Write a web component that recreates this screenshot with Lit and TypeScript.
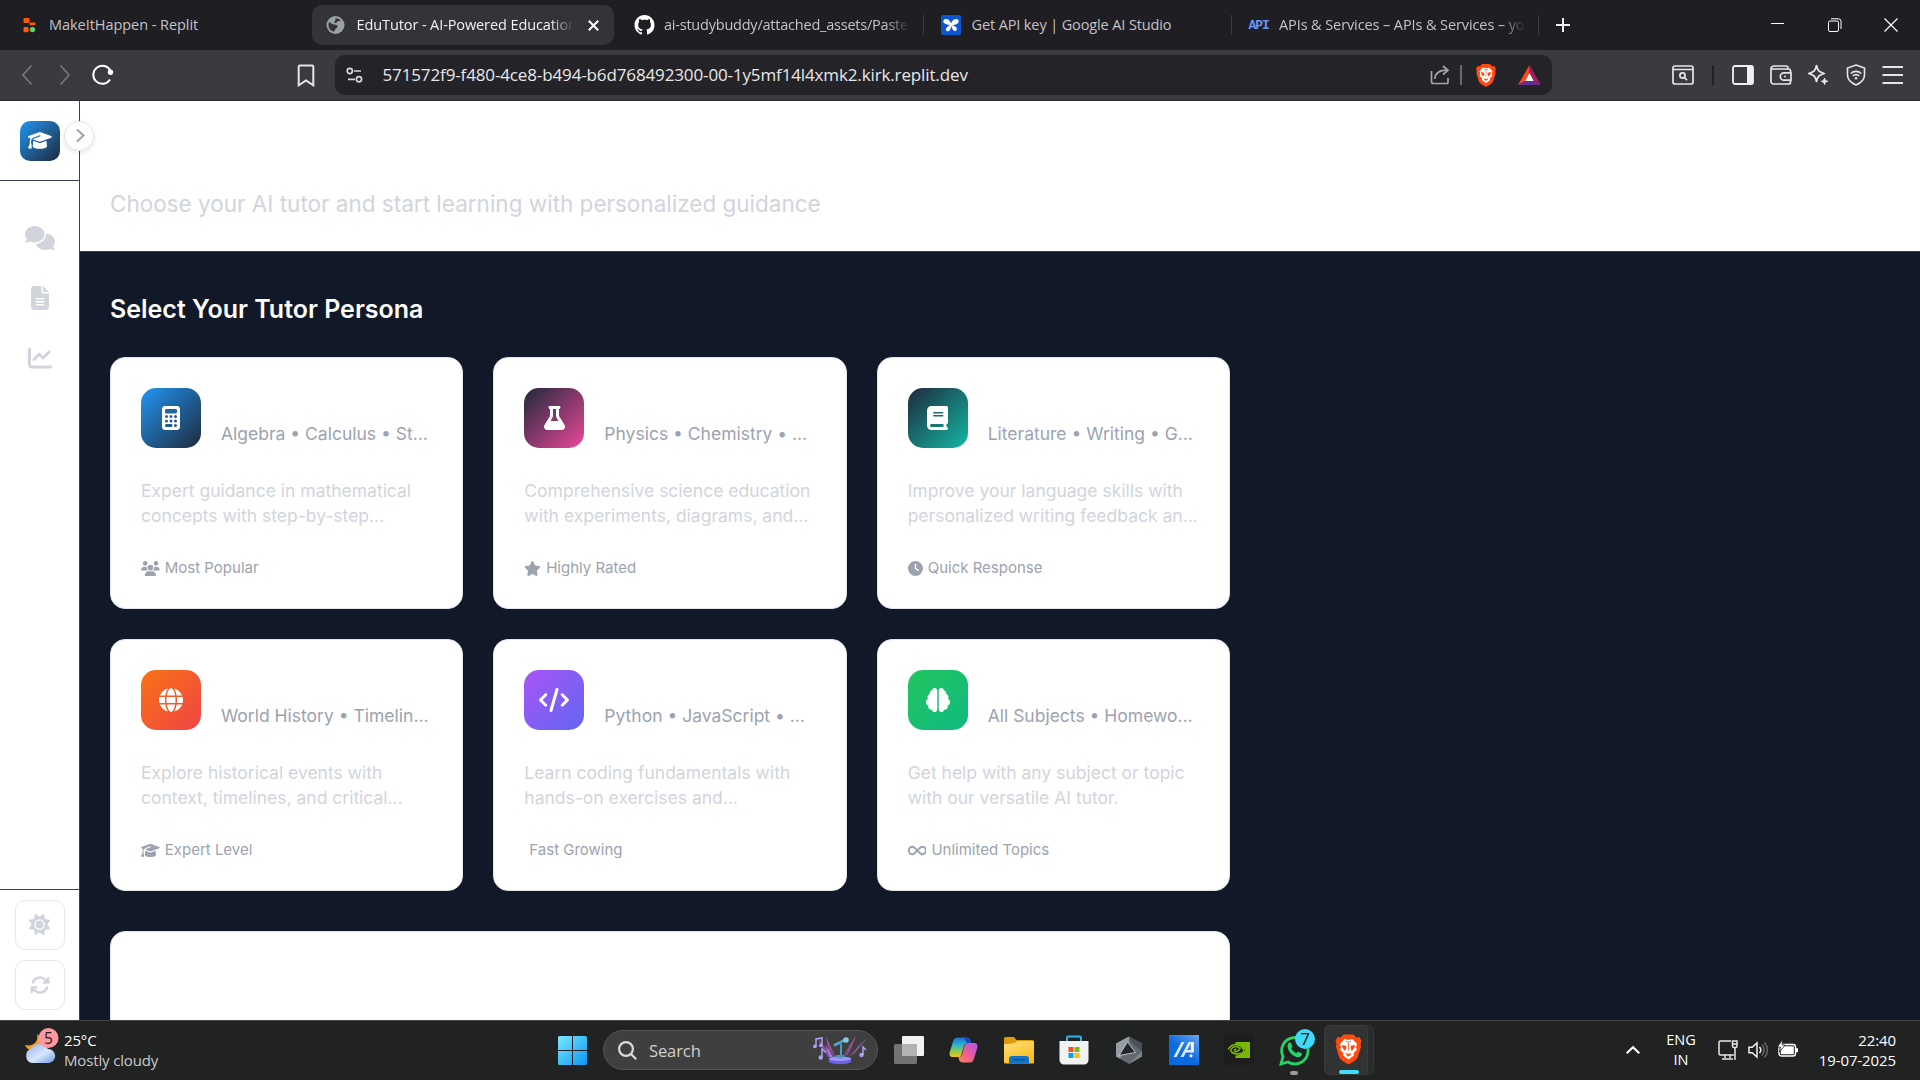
import { LitElement, html, css, svg } from "lit";
import { customElement } from "lit/decorators.js";

const FA: Record<string, [number, string]> = {
  cap: [640, "M320 32c-8.1 0-16.1 1.4-23.7 4.1L15.8 137.4C6.3 140.9 0 149.9 0 160s6.3 19.1 15.8 22.6l57.9 20.9C57.3 229.3 48 259.8 48 291.9v28.1c0 28.4-10.8 57.7-22.3 80.8c-6.5 13-13.9 25.8-22.5 37.6C0 442.7-.9 448.3 .9 453.4s6 8.9 11.2 10.2l64 16c4.2 1.1 8.7 .3 12.4-2s6.3-6.1 7.1-10.4c8.6-42.8 4.3-81.2-2.1-108.7C90.3 344.3 86 329.8 80 316.5V291.9c0-30.2 10.2-58.7 27.9-81.5c12.9-15.5 29.6-28 49.2-35.7l157-61.7c8.2-3.2 17.5 .8 20.7 9s-.8 17.5-9 20.7l-157 61.7c-12.4 4.9-23.3 12.4-32.2 21.6l159.6 57.6c7.6 2.7 15.6 4.1 23.7 4.1s16.1-1.4 23.7-4.1L624.2 182.6c9.5-3.4 15.8-12.5 15.8-22.6s-6.3-19.1-15.8-22.6L343.7 36.1C336.1 33.4 328.1 32 320 32zM128 408c0 35.3 86 72 192 72s192-36.7 192-72L496.7 262.6 354.5 314c-11.1 4-22.8 6-34.5 6s-23.5-2-34.5-6L143.3 262.6 128 408z"],
  comments: [640, "M208 352c114.9 0 208-78.8 208-176S322.9 0 208 0S0 78.8 0 176c0 38.6 14.7 74.3 39.6 103.4c-3.5 9.4-8.7 17.7-14.2 24.7c-4.8 6.2-9.7 11-13.3 14.3c-1.8 1.6-3.3 2.9-4.3 3.7c-.5 .4-.9 .7-1.1 .8l-.2 .2C1 327.2-1.4 334.4 .8 340.9S9.1 352 16 352c21.8 0 43.8-5.6 62.1-12.5c9.2-3.5 17.8-7.4 25.2-11.4C134.1 343.3 169.8 352 208 352zM448 176c0 112.3-99.1 196.9-216.5 207C255.8 457.4 336.4 512 432 512c38.2 0 73.9-8.7 104.7-23.9c7.5 4 16 7.9 25.2 11.4c18.3 6.9 40.3 12.5 62.1 12.5c6.9 0 13.1-4.5 15.2-11.1c2.1-6.6-.2-13.8-5.8-17.9l-.2-.2c-.2-.2-.6-.4-1.1-.8c-1-.8-2.5-2-4.3-3.7c-3.6-3.3-8.5-8.1-13.3-14.3c-5.5-7-10.7-15.4-14.2-24.7c24.9-29 39.6-64.7 39.6-103.4c0-92.8-84.9-168.9-192.6-175.5c.4 5.1 .6 10.3 .6 15.5z"],
  file: [384, "M64 0C28.7 0 0 28.7 0 64V448c0 35.3 28.7 64 64 64H320c35.3 0 64-28.7 64-64V160H256c-17.7 0-32-14.3-32-32V0H64zM256 0V128H384L256 0zM112 256H272c8.8 0 16 7.2 16 16s-7.2 16-16 16H112c-8.8 0-16-7.2-16-16s7.2-16 16-16zm0 64H272c8.8 0 16 7.2 16 16s-7.2 16-16 16H112c-8.8 0-16-7.2-16-16s7.2-16 16-16zm0 64H272c8.8 0 16 7.2 16 16s-7.2 16-16 16H112c-8.8 0-16-7.2-16-16s7.2-16 16-16z"],
  chart: [512, "M64 64c0-17.7-14.3-32-32-32S0 46.3 0 64V400c0 44.2 35.8 80 80 80H480c17.7 0 32-14.3 32-32s-14.3-32-32-32H80c-8.8 0-16-7.2-16-16V64zm406.6 86.6c12.5-12.5 12.5-32.8 0-45.3s-32.8-12.5-45.3 0L320 210.7l-57.4-57.4c-12.5-12.5-32.8-12.5-45.3 0l-112 112c-12.5 12.5-12.5 32.8 0 45.3s32.8 12.5 45.3 0L240 221.3l57.4 57.4c12.5 12.5 32.8 12.5 45.3 0l128-128z"],
  calculator: [384, "M64 0C28.7 0 0 28.7 0 64V448c0 35.3 28.7 64 64 64H320c35.3 0 64-28.7 64-64V64c0-35.3-28.7-64-64-64H64zM96 64H288c17.7 0 32 14.3 32 32v32c0 17.7-14.3 32-32 32H96c-17.7 0-32-14.3-32-32V96c0-17.7 14.3-32 32-32zm32 160a32 32 0 1 1-64 0 32 32 0 1 1 64 0zM96 352a32 32 0 1 1 0-64 32 32 0 1 1 0 64zM64 416c0-17.7 14.3-32 32-32h96c17.7 0 32 14.3 32 32s-14.3 32-32 32H96c-17.7 0-32-14.3-32-32zM192 256a32 32 0 1 1 0-64 32 32 0 1 1 0 64zm32 64a32 32 0 1 1-64 0 32 32 0 1 1 64 0zm64-64a32 32 0 1 1 0-64 32 32 0 1 1 0 64zm32 64a32 32 0 1 1-64 0 32 32 0 1 1 64 0zM288 448a32 32 0 1 1 0-64 32 32 0 1 1 0 64z"],
  flask: [448, "M288 0H160 128C110.3 0 96 14.3 96 32s14.3 32 32 32V196.8c0 11.8-3.3 23.5-9.5 33.5L10.3 406.2C3.6 417.2 0 429.7 0 442.6C0 480.9 31.1 512 69.4 512H378.6c38.3 0 69.4-31.1 69.4-69.4c0-12.8-3.6-25.4-10.3-36.4L329.5 230.4c-6.2-10.1-9.5-21.7-9.5-33.5V64c17.7 0 32-14.3 32-32s-14.3-32-32-32H288zM192 196.8V64h64V196.8c0 23.7 6.6 46.9 19 67.1L309.5 320h-171L173 263.9c12.4-20.2 19-43.4 19-67.1z"],
  book: [448, "M96 0C43 0 0 43 0 96V416c0 53 43 96 96 96H384h32c17.7 0 32-14.3 32-32s-14.3-32-32-32V384c17.7 0 32-14.3 32-32V32c0-17.7-14.3-32-32-32H384 96zm0 384H352v64H96c-17.7 0-32-14.3-32-32s14.3-32 32-32zm32-240c0-8.8 7.2-16 16-16H336c8.8 0 16 7.2 16 16s-7.2 16-16 16H144c-8.8 0-16-7.2-16-16zm16 48H336c8.8 0 16 7.2 16 16s-7.2 16-16 16H144c-8.8 0-16-7.2-16-16s7.2-16 16-16z"],
  globe: [512, "M352 256c0 22.2-1.2 43.6-3.3 64H163.3c-2.2-20.4-3.3-41.8-3.3-64s1.2-43.6 3.3-64H348.7c2.2 20.4 3.3 41.8 3.3 64zm28.8-64H503.9c5.3 20.5 8.1 41.9 8.1 64s-2.8 43.5-8.1 64H380.8c2.1-20.6 3.2-42 3.2-64s-1.1-43.4-3.2-64zm112.6-32H376.7c-10-63.9-29.8-117.4-55.3-151.6c78.3 20.7 142 77.5 171.9 151.6zm-149.1 0H167.7c6.1-36.4 15.5-68.6 27-94.7c10.5-23.6 22.2-40.7 33.5-51.5C239.4 3.2 248.7 0 256 0s16.6 3.2 27.8 13.8c11.3 10.8 23 27.9 33.5 51.5c11.6 26 20.9 58.2 27 94.7zm-209 0H18.6C48.6 85.9 112.2 29.1 190.6 8.4C165.1 42.6 145.3 96.1 135.3 160zM8.1 192H131.2c-2.1 20.6-3.2 42-3.2 64s1.1 43.4 3.2 64H8.1C2.8 299.5 0 278.1 0 256s2.8-43.5 8.1-64zM194.7 446.6c-11.6-26-20.9-58.2-27-94.6H344.3c-6.1 36.4-15.5 68.6-27 94.6c-10.5 23.6-22.2 40.7-33.5 51.5C272.6 508.8 263.3 512 256 512s-16.6-3.2-27.8-13.8c-11.3-10.8-23-27.9-33.5-51.5zM135.3 352c10 63.9 29.8 117.4 55.3 151.6C112.2 482.9 48.6 426.1 18.6 352H135.3zm358.1 0c-30 74.1-93.6 130.9-171.9 151.6c25.5-34.2 45.2-87.7 55.3-151.6H493.4z"],
  code: [640, "M392.8 1.2c-17-4.9-34.7 5-39.6 22l-128 448c-4.9 17 5 34.7 22 39.6s34.7-5 39.6-22l128-448c4.9-17-5-34.7-22-39.6zm80.6 120.1c-12.5 12.5-12.5 32.8 0 45.3L562.7 256l-89.4 89.4c-12.5 12.5-12.5 32.8 0 45.3s32.8 12.5 45.3 0l112-112c12.5-12.5 12.5-32.8 0-45.3l-112-112c-12.5-12.5-32.8-12.5-45.3 0zm-306.7 0c-12.5-12.5-32.8-12.5-45.3 0l-112 112c-12.5 12.5-12.5 32.8 0 45.3l112 112c12.5 12.5 32.8 12.5 45.3 0s12.5-32.8 0-45.3L77.3 256l89.4-89.4c12.5-12.5 12.5-32.8 0-45.3z"],
  brain: [512, "M184 0c30.9 0 56 25.1 56 56V456c0 30.9-25.1 56-56 56c-28.9 0-52.7-21.9-55.7-50.1c-5.2 1.4-10.7 2.1-16.3 2.1c-35.3 0-64-28.7-64-64c0-7.4 1.3-14.6 3.6-21.2C21.4 367.4 0 338.2 0 304c0-31.9 18.7-59.5 45.8-72.3C37.1 220.8 32 207 32 192c0-30.7 21.6-56.3 50.4-62.6C80.8 123.9 80 118 80 112c0-29.9 20.6-55.1 48.3-62.1C131.3 21.9 155.1 0 184 0zM328 0c28.9 0 52.6 21.9 55.7 49.9c27.8 7 48.3 32.1 48.3 62.1c0 6-.8 11.9-2.4 17.4c28.8 6.2 50.4 31.9 50.4 62.6c0 15-5.1 28.8-13.8 39.7C493.3 244.5 512 272.1 512 304c0 34.2-21.4 63.4-51.6 74.8c2.3 6.6 3.6 13.8 3.6 21.2c0 35.3-28.7 64-64 64c-5.6 0-11.1-.7-16.3-2.1c-3 28.2-26.8 50.1-55.7 50.1c-30.9 0-56-25.1-56-56V56c0-30.9 25.1-56 56-56z"],
  users: [640, "M144 0a80 80 0 1 1 0 160A80 80 0 1 1 144 0zM512 0a80 80 0 1 1 0 160A80 80 0 1 1 512 0zM0 298.7C0 239.8 47.8 192 106.7 192h42.7c15.9 0 31 3.5 44.6 9.7c-1.3 7.2-1.9 14.7-1.9 22.3c0 38.2 16.8 72.5 43.3 96c-.2 0-.4 0-.7 0H21.3C9.6 320 0 310.4 0 298.7zM405.3 320c-.2 0-.4 0-.7 0c26.6-23.5 43.3-57.8 43.3-96c0-7.6-.7-15-1.9-22.3c13.6-6.3 28.7-9.7 44.6-9.7h42.7C592.2 192 640 239.8 640 298.7c0 11.8-9.6 21.3-21.3 21.3H405.3zM224 224a96 96 0 1 1 192 0 96 96 0 1 1 -192 0zM128 485.3C128 411.7 187.7 352 261.3 352H378.7C452.3 352 512 411.7 512 485.3c0 14.7-11.9 26.7-26.7 26.7H154.7c-14.7 0-26.7-11.9-26.7-26.7z"],
  star: [576, "M316.9 18C311.6 7 300.4 0 288.1 0s-23.4 7-28.8 18L195 150.3 51.4 171.5c-12 1.8-22 10.2-25.7 21.7s-.7 24.2 7.9 32.7L137.8 329 113.2 474.7c-2 12 3 24.2 12.9 31.3s23 8 33.8 2.3l128.3-68.5 128.3 68.5c10.8 5.7 23.9 4.9 33.8-2.3s14.9-19.3 12.9-31.3L438.5 329 542.7 225.9c8.6-8.5 11.7-21.2 7.9-32.7s-13.7-19.9-25.7-21.7L381.2 150.3 316.9 18z"],
  clock: [512, "M256 0a256 256 0 1 1 0 512A256 256 0 1 1 256 0zM232 120V256c0 8 4 15.5 10.7 20l96 64c11 7.4 25.9 4.4 33.3-6.7s4.4-25.9-6.7-33.3L280 243.2V120c0-13.3-10.7-24-24-24s-24 10.7-24 24z"],
  infinity: [640, "M0 241.1C0 161 65 96 145.1 96c38.5 0 75.4 15.3 102.6 42.5L320 210.7l72.2-72.2C419.5 111.3 456.4 96 494.9 96C575 96 640 161 640 241.1v29.7C640 351 575 416 494.9 416c-38.5 0-75.4-15.3-102.6-42.5L320 301.3l-72.2 72.2C220.5 400.7 183.6 416 145.1 416C65 416 0 351 0 270.9V241.1zM274.7 256l-72.2-72.2c-15.2-15.2-35.9-23.8-57.4-23.8C100.3 160 64 196.3 64 241.1v29.7c0 44.8 36.3 81.1 81.1 81.1c21.5 0 42.2-8.5 57.4-23.8L274.7 256zm90.5 0l72.2 72.2c15.2 15.2 35.9 23.8 57.4 23.8c44.8 0 81.1-36.3 81.1-81.1V241.1c0-44.8-36.3-81.1-81.1-81.1c-21.5 0-42.2 8.5-57.4 23.8L365.3 256z"],
  sun: [512, "M361.5 1.2c5 2.1 8.6 6.6 9.6 11.9L391 121l107.9 19.8c5.3 1 9.8 4.6 11.9 9.6s1.5 10.7-1.6 15.2L446.9 256l62.3 90.3c3.1 4.5 3.7 10.2 1.6 15.2s-6.6 8.6-11.9 9.6L391 391 371.1 498.9c-1 5.3-4.6 9.8-9.6 11.9s-10.7 1.5-15.2-1.6L256 446.9l-90.3 62.3c-4.5 3.1-10.2 3.7-15.2 1.6s-8.6-6.6-9.6-11.9L121 391 13.1 371.1c-5.3-1-9.8-4.6-11.9-9.6s-1.5-10.7 1.6-15.2L65.1 256 2.8 165.7c-3.1-4.5-3.7-10.2-1.6-15.2s6.6-8.6 11.9-9.6L121 121 140.9 13.1c1-5.3 4.6-9.8 9.6-11.9s10.7-1.5 15.2 1.6L256 65.1 346.3 2.8c4.5-3.1 10.2-3.7 15.2-1.6zM160 256a96 96 0 1 1 192 0 96 96 0 1 1 -192 0zm224 0a128 128 0 1 0 -256 0 128 128 0 1 0 256 0z"],
  sync: [512, "M105.1 202.6c7.7-21.8 20.2-42.3 37.8-59.8c62.5-62.5 163.8-62.5 226.3 0L386.3 160H352c-17.7 0-32 14.3-32 32s14.3 32 32 32H463.5h.4c17.7 0 32-14.3 32-32V80c0-17.7-14.3-32-32-32s-32 14.3-32 32v35.2L414.4 97.6c-87.5-87.5-229.3-87.5-316.8 0C73.2 122 55.6 150.7 44.8 181.4c-5.9 16.7 2.9 34.9 19.5 40.8s34.9-2.9 40.8-19.5zM39 289.3c-5 1.5-9.8 4.2-13.7 8.2c-4 4-6.7 8.8-8.1 14c-.3 1.2-.6 2.5-.8 3.8c-.3 1.7-.4 3.4-.4 5.1V432c0 17.7 14.3 32 32 32s32-14.3 32-32V396.9l17.6 17.5c87.5 87.4 229.3 87.4 316.7 0c24.4-24.4 42.1-53.1 52.9-83.7c5.9-16.7-2.9-34.9-19.5-40.8s-34.9 2.9-40.8 19.5c-7.7 21.8-20.2 42.3-37.8 59.8c-62.5 62.5-163.8 62.5-226.3 0l-.1-.1L125.6 352H160c17.7 0 32-14.3 32-32s-14.3-32-32-32H48.4c-1.6 0-3.2 .1-4.8 .3s-3.1 .5-4.6 1z"],
};

const fa = (name: string, size: number) => {
  const [w, d] = FA[name];
  return html`<svg width=${(w / 512) * size} height=${size} viewBox="0 0 ${w} 512" fill="currentColor" fill-rule="evenodd"><path d=${d}></path></svg>`;
};

const GITHUB = "M8 0C3.58 0 0 3.58 0 8c0 3.54 2.29 6.53 5.47 7.59.4.07.55-.17.55-.38 0-.19-.01-.82-.01-1.49-2.01.37-2.53-.49-2.69-.94-.09-.23-.48-.94-.82-1.13-.28-.15-.68-.52-.01-.53.63-.01 1.08.58 1.23.82.72 1.21 1.87.87 2.33.66.07-.52.28-.87.51-1.07-1.78-.2-3.64-.89-3.64-3.95 0-.87.31-1.59.82-2.15-.08-.2-.36-1.02.08-2.12 0 0 .67-.21 2.2.82.64-.18 1.32-.27 2-.27s1.36.09 2 .27c1.53-1.04 2.2-.82 2.2-.82.44 1.1.16 1.92.08 2.12.51.56.82 1.27.82 2.15 0 3.07-1.87 3.75-3.65 3.95.29.25.54.73.54 1.48 0 1.07-.01 1.93-.01 2.2 0 .21.15.46.55.38A8.01 8.01 0 0 0 16 8c0-4.42-3.58-8-8-8z";

/* Lion emblem on a 26 x 30 grid. */
const lion = svg`
  <path d="M8 0h10l3 3 3-.5 2 4-1 3 .6 2.500-3.600 11.500-3 3L13 30l-6-3.500-3-3L.4 12 1 9.500 0 6.500l2-4L5 3z" fill="#ff4a12"></path>
  <path d="M9 4.500l4 1 4-1 4.500 5-1 3 .8 3-3.300 3.200.4 2.300-5.400 4-5.400-4 .4-2.300-3.300-3.200.8-3-1-3z" fill="#fff"></path>
  <path d="M6.500 10.500l4 .8.5 1.700-1.200 3.500L7 13.500zM19.500 10.500l-4 .8-.5 1.700 1.200 3.500 2.800-3zM10 18.500l3 1 3-1-1.200 2.300L13 22l-1.800-1.200z" fill="#ff4a12"></path>
  <path d="M13 8v8M10.300 6.800l2.700.7 2.700-.7" stroke="#ff4a12" stroke-width=".8" fill="none"></path>`;

const ICONS = {
  replit: html`<svg width="20" height="20" viewBox="0 0 20 20"><rect x="4.500" y="3" width="6" height="5" rx="1" fill="#ff5c00"></rect><rect x="10.500" y="7.500" width="6" height="2.800" rx="1" fill="#ff5c00"></rect><rect x="4.500" y="12" width="5" height="5.300" rx="1" fill="#ff5c00"></rect><circle cx="13.500" cy="14.600" r="2.700" fill="#62d26f"></circle></svg>`,
  world: html`<svg width="20" height="20" viewBox="0 0 20 20"><circle cx="9.500" cy="10" r="9" fill="#9aa0a6"></circle><path d="M2.800 7.500c2-.3 3 1.800 5 2s3.700.3 3.700 2-1.500 1.500-2 2.500-1 2.200-1.600 2.700C5 16 2.500 13.500 2.500 10zM9.500 3.200c2 0 4 .8 5.200 2.300-1 .6-2 .2-3 .8s-.7 1.700-2 1.700-1.700-1-1-2 1.300-1.300.8-2.800z" fill="#343338"></path></svg>`,
  github: html`<svg width="21" height="20" viewBox="0 0 16 16" fill="#fff"><path d=${GITHUB}></path></svg>`,
  studio: html`<svg width="20" height="20" viewBox="0 0 20 20"><rect width="20" height="20" rx="2" fill="#0b57d0"></rect><path d="M10.500 10C9.500 5 6 3.300 3.800 4.200S2 7.700 4.200 8.800s4 1.500 6.300 1.200z" fill="#fff"></path><path d="M9.800 10.500c0-4 3-7.200 6-6.500s2.200 4.300-.3 5.200-3.700.8-5.700 1.300z" fill="#fff"></path><path d="M10.200 9.500c-3 1.500-5.700 3.500-5.200 5.500s3.300 1.500 4.200-.5 1-3 1-5zM9.800 9.500c1 3 2 6.500 4.200 6.500s2.500-2.500.8-4-3.200-1.700-5-2.500z" fill="#fff"></path></svg>`,
  api: html`<span class="api">API</span>`,
};

const TABS = [
  { icon: ICONS.replit, title: "MakeItHappen - Replit", cls: "t0" },
  { icon: ICONS.world, title: "EduTutor - AI-Powered Education", cls: "t1 active" },
  { icon: ICONS.github, title: "ai-studybuddy/attached_assets/Paste", cls: "t2 sep" },
  { icon: ICONS.studio, title: "Get API key | Google AI Studio", cls: "t3 sep" },
  { icon: ICONS.api, title: "APIs & Services – APIs & Services – yo", cls: "t4 sep" },
];

const TUTORS = [
  { icon: "calculator", tone: "math", topics: "Algebra • Calculus • St…", lines: ["Expert guidance in mathematical", "concepts with step-by-step…"], badge: "users", note: "Most Popular" },
  { icon: "flask", tone: "science", topics: "Physics • Chemistry • …", lines: ["Comprehensive science education", "with experiments, diagrams, and…"], badge: "star", note: "Highly Rated" },
  { icon: "book", tone: "lang", topics: "Literature • Writing • G…", lines: ["Improve your language skills with", "personalized writing feedback an…"], badge: "clock", note: "Quick Response" },
  { icon: "globe", tone: "history", topics: "World History • Timelin…", lines: ["Explore historical events with", "context, timelines, and critical…"], badge: "cap", note: "Expert Level" },
  { icon: "code", tone: "coding", topics: "Python • JavaScript • …", lines: ["Learn coding fundamentals with", "hands-on exercises and…"], badge: "", note: "Fast Growing" },
  { icon: "brain", tone: "general", topics: "All Subjects • Homewo…", lines: ["Get help with any subject or topic", "with our versatile AI tutor."], badge: "infinity", note: "Unlimited Topics" },
];

@customElement("browser-chrome")
class BrowserChrome extends LitElement {
  static styles = css`
    :host { display: block; height: 101px; font-family: "Open Sans", "Noto Sans", sans-serif; color: #c3c2c6; }
    svg { display: block; flex: none; }
    .tabs { height: 50px; box-sizing: border-box; background: #1f1e23; display: flex; align-items: center; padding-left: 1.500px; }
    .slot { width: 307.500px; height: 50px; box-sizing: border-box; padding: 5px 3px; display: flex; flex: none; }
    .sep { background: linear-gradient(#3c3b40, #3c3b40) right center / 1px 20px no-repeat; }
    .tab { flex: 1; display: flex; align-items: center; padding-left: 14px; border-radius: 10px; min-width: 0; }
    .active .tab { background: #343338; color: #f1f1f3; }
    .fav { width: 20px; height: 20px; display: flex; align-items: center; flex: none; margin-right: 10.500px; }
    .title { width: 246px; overflow: hidden; white-space: pre; font-size: 14.500px; line-height: 22px; }
    .active .title { width: 217px; -webkit-mask-image: linear-gradient(90deg, #000 89%, transparent); }
    .t2 .title, .t4 .title { -webkit-mask-image: linear-gradient(90deg, #000 90%, transparent); }
    .t0 .title { letter-spacing: -0.05px; }
    .t1 .title { letter-spacing: -0.1px; }
    .t2 .title { letter-spacing: -0.22px; }
    .t3 .title { letter-spacing: -0.12px; }
    .t4 .title { letter-spacing: -0.1px; }
    .x { margin-left: 14px; }
    .api { font: 700 13px "Liberation Mono", monospace; letter-spacing: -1px; color: #6a95f5; }
    .plus { margin-left: 17px; }
    .win { margin-left: auto; display: flex; gap: 42.500px; padding-right: 22px; align-items: center; }
    .bar { height: 51px; box-sizing: border-box; background: #3b3a3f; border-bottom: 1px solid #2c2b30; display: flex; align-items: center; padding-left: 20px; }
    .nav { display: flex; align-items: center; gap: 24px; width: 277px; flex: none; }
    .reload { margin-left: -4px; }
    .url { margin-left: 20px; width: 1217px; height: 40px; box-sizing: border-box; border-radius: 10px; background: #242328; display: flex; align-items: center; padding: 0 11px 0 11px; flex: none; }
    .addr { margin-left: 19.500px; font-size: 17px; line-height: 24px; color: #e8e8ea; letter-spacing: -0.13px; white-space: nowrap; flex: 1; }
    .line { width: 2px; height: 20px; background: #69686d; margin: 0 14px 0 10px; }
    .bat { margin-left: 22px; }
    .right { display: flex; align-items: center; margin-left: auto; padding-right: 16px; gap: 16px; }
    .find { margin-right: 2px; }
    .line2 { width: 2px; height: 20px; background: #222126; margin-right: 2px; }
    .spark { margin: 0 1px 0 -1px; }
  `;
  render() {
    return html`
      <div class="tabs">
        ${TABS.map((t) => html`<div class="slot ${t.cls}"><div class="tab"><span class="fav">${t.icon}</span><span class="title">${t.title}</span>
          ${t.cls.includes("active") ? html`<svg class="x" width="11" height="11" viewBox="0 0 11 11" stroke="#fff" stroke-width="2"><path d="M.8.8l9.400 9.400M10.200.8L.8 10.200"></path></svg>` : ""}</div></div>`)}
        <svg class="plus" width="14" height="14" viewBox="0 0 14 14" stroke="#eee" stroke-width="2"><path d="M7 0v14M0 7h14"></path></svg>
        <div class="win">
          <svg width="14" height="14" viewBox="0 0 14 14" stroke="#fff" stroke-width="1"><path d="M0 5.500h13"></path></svg>
          <svg width="14" height="14" viewBox="0 0 14 14" stroke="#fff" fill="none"><rect x=".5" y="3" width="10" height="10.500" rx="1.500"></rect><path d="M3 .8h7.500a2.500 2.500 0 0 1 2.500 2.500V11"></path></svg>
          <svg width="14" height="14" viewBox="0 0 14 14" stroke="#fff" stroke-width="1.200"><path d="M.5.5l13 13M13.500.5l-13 13"></path></svg>
        </div>
      </div>
      <div class="bar">
        <div class="nav">
          <svg width="14" height="22" viewBox="0 0 14 22" fill="none" stroke="#77767b" stroke-width="1.700"><path d="M11.500 1.500L3 11l8.500 9.500"></path></svg>
          <svg width="14" height="22" viewBox="0 0 14 22" fill="none" stroke="#77767b" stroke-width="1.700"><path d="M2.500 1.500L11 11l-8.500 9.500"></path></svg>
          <svg class="reload" width="22" height="22" viewBox="0 0 22 22"><path d="M18 15.500A9 9 0 1 1 18.500 7" fill="none" stroke="#fff" stroke-width="2"></path><circle cx="18.500" cy="8.300" r="2.700" fill="#fff"></circle></svg>
        </div>
        <svg width="18" height="23" viewBox="0 0 18 23" fill="none" stroke="#e6e6e8" stroke-width="2"><path d="M3 1.500h12a1.300 1.300 0 0 1 1.300 1.300V21.300L9 16.500l-7.300 4.800V2.800A1.300 1.300 0 0 1 3 1.500z"></path></svg>
        <div class="url">
          <svg width="17" height="16" viewBox="0 0 17 16" fill="none" stroke="#d8d8da" stroke-width="1.700"><circle cx="3.800" cy="4" r="2.600"></circle><path d="M8 4h7M2 12.300h7"></path><circle cx="13" cy="12.300" r="2.600"></circle></svg>
          <span class="addr">571572f9-f480-4ce8-b494-b6d768492300-00-1y5mf14l4xmk2.kirk.replit.dev</span>
          <svg width="20" height="20" viewBox="0 0 20 20" fill="none" stroke="#a5a4a9" stroke-width="1.700"><path d="M1.500 6v10.500a2 2 0 0 0 2 2H18M18 18.500V13M4.800 14c.3-5 4-9 13-8.800M13 1l5 4.300-5 4.200"></path></svg>
          <span class="line"></span>
          <svg width="20" height="23" viewBox="0 0 26 30">${lion}</svg>
          <svg class="bat" width="23" height="20" viewBox="0 0 23 20"><path d="M11.500 0L0 20l7.500-4 4-8z" fill="#ff4724"></path><path d="M11.500 0L23 20l-7.500-4-4-8z" fill="#9e1f63"></path><path d="M0 20h23l-7.500-4h-8z" fill="#662d91"></path><path d="M11.500 8l-4.200 8h8.400z" fill="#fff"></path></svg>
        </div>
        <div class="right">
          <svg class="find" width="22" height="20" viewBox="0 0 22 20" fill="none" stroke="#e6e6e8" stroke-width="1.700"><rect x="1" y="1" width="20" height="18" rx="2"></rect><path d="M1 4.500h20" stroke-width="1.500"></path><circle cx="10.500" cy="10.500" r="2.600"></circle><path d="M12.500 12.500l2.500 2.800"></path></svg>
          <span class="line2"></span>
          <svg width="22" height="20" viewBox="0 0 22 20"><rect x="1" y="1" width="20" height="18" rx="2" fill="none" stroke="#f1f1f3" stroke-width="1.800"></rect><path d="M15 1h6v18h-6z" fill="#f1f1f3"></path></svg>
          <svg width="22" height="20" viewBox="0 0 22 20" fill="none" stroke="#e6e6e8" stroke-width="1.700"><path d="M20.500 7.500V5.500a2 2 0 0 0-2-1.500H1M1 4v12.500a2.500 2.500 0 0 0 2.500 2.500h15a2 2 0 0 0 2-2v-1.500M1 4a3 3 0 0 1 3-3h12a2 2 0 0 1 2 2v1M21 7.800h-7a3.600 3.600 0 0 0 0 7.400h7zM14 11.500h1.800"></path></svg>
          <svg class="spark" width="22" height="22" viewBox="0 0 22 22" fill="none" stroke="#e6e6e8" stroke-width="1.700"><path d="M9.500 1.500c1 5 2.500 6.500 7.800 8-5.300 1.500-6.800 3-7.800 8-1-5-2.500-6.500-7.800-8 5.300-1.500 6.800-3 7.800-8z" stroke-linejoin="round"></path><path d="M17.500 14c.5 2.200 1 2.700 3.300 3.300-2.300.6-2.800 1.100-3.300 3.300-.5-2.200-1-2.700-3.300-3.300 2.300-.6 2.800-1.100 3.300-3.300z" fill="#e6e6e8" stroke-width="1"></path></svg>
          <svg width="20" height="22" viewBox="0 0 20 22" fill="none" stroke="#e6e6e8" stroke-width="1.600"><path d="M10 1l8.500 3v7c0 4.500-3.500 7.800-8.500 10-5-2.200-8.500-5.500-8.500-10V4z"></path><path d="M4.800 9.500c3-2.900 7.400-2.900 10.400 0M6.800 12c1.900-1.700 4.500-1.700 6.400 0"></path><circle cx="10" cy="14.300" r="1.200" fill="#e6e6e8" stroke="none"></circle></svg>
          <svg width="22" height="20" viewBox="0 0 22 20" stroke="#e6e6e8" stroke-width="2"><path d="M0.500 2h20.500M.5 10h20.500M.5 18h20.500"></path></svg>
        </div>
      </div>`;
  }
}

@customElement("tutor-card")
class TutorCard extends LitElement {
  static properties = { tutor: { attribute: false } };
  declare tutor: (typeof TUTORS)[number];
  static styles = css`
    :host { display: block; box-sizing: border-box; height: 252px; padding: 30px; background: #fff; border: 1px solid #e1e4e9; border-radius: 15px; white-space: nowrap; min-width: 0; }
    svg { display: block; }
    .head { display: flex; gap: 20px; align-items: flex-end; height: 60px; }
    .tile { width: 60px; height: 60px; border-radius: 15px; display: flex; align-items: center; justify-content: center; color: #fff; flex: none; }
    .math { background: linear-gradient(135deg, #2196f3, #1e293b); }
    .science { background: linear-gradient(135deg, #1e293b, #ec4899); }
    .lang { background: linear-gradient(135deg, #1e293b, #14b8a6); }
    .history { background: linear-gradient(135deg, #f97316, #ef4444); }
    .coding { background: linear-gradient(135deg, #a855f7, #6366f1); }
    .general { background: linear-gradient(135deg, #22c55e, #10b981); }
    .topics { font-size: 17.500px; line-height: 25px; color: #9ca3af; padding-bottom: 2px; }
    .desc { margin-top: 30px; font-size: 17.500px; line-height: 25px; color: #d1d5db; }
    .note { margin-top: 30px; display: flex; align-items: center; gap: 5px; font-size: 15px; line-height: 20px; color: #9ca3af; }
  `;
  render() {
    const t = this.tutor;
    return html`
      <div class="head"><div class="tile ${t.tone}">${fa(t.icon, 24)}</div><div class="topics">${t.topics}</div></div>
      <div class="desc">${t.lines.map((l) => html`<div>${l}</div>`)}</div>
      <div class="note"><i>${t.badge ? fa(t.badge, 15) : ""}</i><span>${t.note}</span></div>`;
  }
}

@customElement("task-bar")
class TaskBar extends LitElement {
  static styles = css`
    :host { display: grid; grid-template-columns: 558px 816px 1fr; height: 60px; box-sizing: border-box; border-top: 1px solid #454647; background: #212222; font-family: "Open Sans", "Noto Sans", sans-serif; color: #fff; font-size: 14.500px; line-height: 20px; }
    svg { display: block; flex: none; overflow: visible; }
    .weather { display: flex; padding: 8px 0 0 24px; gap: 9px; }
    .t { padding-top: 1px; font-size: 15px; letter-spacing: -0.15px; }
    .dim { color: #c9c9c9; }
    .mid { display: flex; align-items: center; height: 58px; }
    .search { margin-left: 16px; width: 275px; height: 40px; box-sizing: border-box; border: 1px solid #555; border-radius: 20px; background: #3f3f3f; display: flex; align-items: center; padding: 0 9px 0 14px; }
    .q { margin-left: 12px; flex: 1; font-size: 16.500px; color: #cfcfcf; letter-spacing: -0.1px; padding-top: 1px; }
    .apps { display: flex; align-items: center; margin-left: 16px; gap: 25px; }
    .apps > * { width: 30px; height: 30px; }
    .badged { font: 17px/20px "Open Sans", sans-serif; }
    .apps > .brave { width: 50px; height: 50px; margin-left: -10px; }
    .tray { display: flex; align-items: center; justify-content: flex-end; padding-right: 24px; height: 58px; }
    .lang { text-align: center; width: 34px; margin: 0 20px 0 24px; }
    .sys { display: flex; gap: 10px; }
    .clock { margin: -1px 0 0 18px; text-align: right; width: 80px; font-size: 15px; letter-spacing: -0.1px; white-space: nowrap; }
  `;
  render() {
    return html`
      <div class="weather">
        <svg width="31" height="42" viewBox="0 0 31 42">
          <defs><linearGradient id="c" x1="0" y1="0" x2="1" y2="1"><stop offset="0" stop-color="#8fb4f0"></stop><stop offset=".55" stop-color="#d8e6fb"></stop><stop offset="1" stop-color="#6f9ae8"></stop></linearGradient></defs>
          <path d="M13 5c2 8-4 13-12 11 2 5 8 7 14 4l6-8z" fill="#f5a02a"></path>
          <path d="M8 34a7.500 7.500 0 0 1-.5-14.500A9.500 9.500 0 0 1 24 20a7 7 0 0 1 .5 14z" fill="url(#c)"></path>
          <circle cx="24.500" cy="9" r="10" fill="#ff97a3"></circle>
          <text x="24.500" y="14.500" text-anchor="middle" font-size="15.500" fill="#222">5</text>
        </svg>
        <div class="t"><div>25°C</div><div class="dim">Mostly cloudy</div></div>
      </div>
      <div class="mid">
        <svg width="29" height="29" viewBox="0 0 29 29"><defs><linearGradient id="w" x1="0" y1="0" x2="1" y2="1" ><stop offset="0" stop-color="#7be9fd"></stop><stop offset="1" stop-color="#0a95f5"></stop></linearGradient></defs><path d="M1.500 0H14v14H0V1.500A1.500 1.500 0 0 1 1.500 0zM15 0h12.500A1.500 1.500 0 0 1 29 1.500V14H15zM0 15h14v14H1.500A1.500 1.500 0 0 1 0 27.500zM15 15h14v12.500a1.500 1.500 0 0 1-1.500 1.500H15z" fill="url(#w)"></path></svg>
        <div class="search">
          <svg width="19" height="19" viewBox="0 0 19 19" fill="none" stroke="#d6dade" stroke-width="2.200"><circle cx="8" cy="8" r="6.900"></circle><path d="M13 13l5.200 5.200"></path></svg>
          <span class="q">Search</span>
          <svg width="56" height="28" viewBox="0 0 56 28">
            <defs><linearGradient id="b1" x1="0" y1="0" x2="0" y2="1"><stop offset="0" stop-color="#d95bb0"></stop><stop offset="1" stop-color="#5c4a78"></stop></linearGradient></defs>
            <path d="M6 3l15 18h-6zM14 1l10 20h-6zM44 0L36 19l-6 2zM55 2L42 18l-6 3z" fill="url(#b1)"></path>
            <path d="M13 8l8 13h-4zM45 12l4-6-8 14z" fill="#a878d8"></path>
            <ellipse cx="28" cy="25" rx="11.500" ry="3.200" fill="#6a63e8"></ellipse><ellipse cx="28" cy="22.800" rx="11.500" ry="2.200" fill="#9c97ff"></ellipse>
            <path d="M29 20V8" stroke="#4d9fc0" stroke-width="2"></path><path d="M22 9.500L33 4" stroke="#5aa5c4" stroke-width="2.600"></path><circle cx="34" cy="4" r="2.800" fill="#8cc8dc"></circle><ellipse cx="28" cy="20.300" rx="5" ry="1.600" fill="#4d93b5"></ellipse>
            <g fill="none" stroke="#a9a2f7" stroke-width="1.500"><path d="M4 10V3l6-1v7"></path><path d="M10 21v-8l4 3.500M51 19v-8l3 3"></path></g>
            <g fill="#a9a2f7"><circle cx="2.900" cy="10.300" r="1.900"></circle><circle cx="8.900" cy="9.300" r="1.900"></circle><circle cx="8.800" cy="21.500" r="2.200"></circle><circle cx="49.500" cy="19" r="2.200"></circle></g>
          </svg>
        </div>
        <div class="apps">
          <svg viewBox="0 0 30 30"><rect x="8" y="1" width="22" height="20" rx="1" fill="#f2f2f2"></rect><rect x="0" y="9" width="23" height="20" rx="1.500" fill="#737373"></rect><rect x="8" y="9" width="15" height="12" fill="#b3b3b3"></rect></svg>
          <svg viewBox="0 0 30 30"><defs><linearGradient id="p1" x1="0" y1="0" x2="0" y2="1"><stop offset="0" stop-color="#1a6fd8"></stop><stop offset=".4" stop-color="#2fb6c8"></stop><stop offset=".7" stop-color="#8fc94a"></stop><stop offset="1" stop-color="#f4c426"></stop></linearGradient><linearGradient id="p2" x1="1" y1="0" x2="0" y2="1"><stop offset="0" stop-color="#a35cf0"></stop><stop offset=".5" stop-color="#ee5a9b"></stop><stop offset="1" stop-color="#fb8a4b"></stop></linearGradient></defs>
            <path d="M9 2.500h9c2 0 3 1 3.500 3L22 8h-3c-2.500 0-3.500 1-4.200 3.500L12.500 19c-.8 2.500-1 3-3.500 3H4c-3 0-4-2-3.200-5L4 6.500C5 3.500 6 2.500 9 2.500z" fill="url(#p1)"></path>
            <path d="M21 27.500h-7c-2.500 0-3.500-1-4-3L9.300 22c2.500 0 3.200-1 4-3.500l2-7C16 9 17 8 19.500 8H25c3 0 4 2 3.200 5L25 23.500c-1 3-2 4-4 4z" fill="url(#p2)"></path><path d="M14.500 2.500H18c2 0 3 1 3.500 3L22 8h-4z" fill="#2243b8"></path></svg>
          <svg viewBox="0 0 30 30"><defs><linearGradient id="fo" x1="0" y1="0" x2="0.600" y2="1"><stop offset="0" stop-color="#ffe07a"></stop><stop offset="1" stop-color="#fbbb1e"></stop></linearGradient></defs><path d="M0 3.500A1.500 1.500 0 0 1 1.500 2H10l2.500 3H28.500A1.500 1.500 0 0 1 30 6.500V20H0z" fill="#dd9a0b"></path><path d="M0 9c6 0 11-.2 13-3h15.500A1.500 1.500 0 0 1 30 7.500V27a1.500 1.500 0 0 1-1.500 1.500h-27A1.500 1.500 0 0 1 0 27z" fill="url(#fo)"></path><path d="M5 28.500V24a3 3 0 0 1 3-3h14a3 3 0 0 1 3 3v4.500z" fill="#1174c8"></path><path d="M9 24.700h12" stroke="#0b4f93" stroke-width="1.300"></path></svg>
          <svg viewBox="0 0 30 30"><path d="M8 7V3a1.500 1.500 0 0 1 1.500-1.500h11A1.500 1.500 0 0 1 22 3v4" fill="none" stroke="#32b4ea" stroke-width="2"></path><path d="M.5 6h29v19a4.500 4.500 0 0 1-4.500 4.500H5A4.500 4.500 0 0 1 .5 25z" fill="#f2f2f2"></path><path d="M9.500 12h5v5h-5z" fill="#f25022"></path><path d="M15.500 12h5v5h-5z" fill="#7fba00"></path><path d="M9.500 18h5v5h-5z" fill="#00a4ef"></path><path d="M15.500 18h5v5h-5z" fill="#ffb900"></path></svg>
          <svg viewBox="0 0 30 30"><path d="M15 1.500L28 8.500v13L15 29 2 21.500v-13z" fill="#62686f"></path><path d="M15 1.500L2 8.500v13l4 2L15 8z" fill="#969ca3"></path><path d="M15 1.500l13 7v8L17 7z" fill="#4b5158"></path><path d="M15 29l13-7.500v-5L24 20z" fill="#7f858c"></path><path d="M13.500 7L5 20.500 21.500 17.500z" fill="#24262a" stroke="#b9bfc5" stroke-width="1"></path></svg>
          <svg viewBox="0 0 30 30"><defs><linearGradient id="as" x1="1" y1="0" x2="0.500" y2=".6"><stop offset="0" stop-color="#6aa5f0"></stop><stop offset="1" stop-color="#0a6ae0"></stop></linearGradient></defs><path d="M0 0h30v30H0z" fill="url(#as)"></path><path d="M12.500 7h3L7.500 22h-3z" fill="#dfeaff"></path><path d="M19.500 7h3L14.500 22h-3z" fill="#dfeaff"></path><path d="M21.800 7h3v10.500h-3z" fill="#fff"></path><path d="M17 15h6v2.500h-7.300z" fill="#dfeaff"></path><circle cx="22" cy="20.800" r="1.600" fill="#fff"></circle></svg>
          <svg viewBox="0 0 30 30"><path d="M0 0h30v30H0z" fill="#1c1d1c"></path><path d="M11.500 7H26v16H11.500z" fill="#76b900"></path><path d="M3.500 14.500c4-6 10.500-7 15-2.200 1 1 2 2.200 2.700 3-2.700 3.300-6 5.200-9.700 5.200-3.500 0-6.500-2.500-8-6z" fill="#1c1d1c"></path><path d="M4 14.500c4-6 10-6.500 14-2s1 6-5.500 6.500C8 18.500 6 16 7 14.300c2-3.500 6.500-3.700 9-.8-1 2.500-4 4-5.500 2.500 0-1.500 1-2 2-1.800" fill="none" stroke="#76b900" stroke-width="1.500"></path></svg>
          <svg class="badged" viewBox="0 0 30 30"><path d="M2 29l2-7.500A13.200 13.200 0 1 1 9 27z" fill="none" stroke="#25d366" stroke-width="2.800"></path><path d="M9.500 8c1-1 2-1 2.600.2l1.200 2.800c.3.800-1.200 2-.8 2.800 1 1.900 2.500 3.300 4.500 4.200.8.300 1.700-1.600 2.600-1.200l2.700 1.300c1 .5.700 2.300-.4 3.200-2.500 2-6.500.6-9.500-2.300S7.300 11 9.500 8z" fill="#25d366"></path><rect x="11" y="36" width="8" height="4" rx="2" fill="#9a9a9a"></rect><circle cx="26" cy="4" r="10" fill="#3fd9fb"></circle><text x="26" y="10" text-anchor="middle" fill="#111">7</text></svg>
          <svg class="brave" viewBox="0 0 50 50"><rect x="4" y="0.500" width="45.500" height="49" rx="5" fill="#2a2b2b" stroke="#363737"></rect><rect x=".5" y=".5" width="43" height="49" rx="5" fill="#313232" stroke="#3b3c3c"></rect><g transform="translate(11.500 9.500)">${lion}</g><rect x="15" y="45" width="20" height="4" rx="2" fill="#3fdcff"></rect></svg>
        </div>
      </div>
      <div class="tray">
        <svg width="14" height="8" viewBox="0 0 14 8" fill="none" stroke="#fff" stroke-width="2"><path d="M.7 7.300L7 1.200l6.300 6.100"></path></svg>
        <div class="lang"><div>ENG</div><div>IN</div></div>
        <div class="sys">
          <svg width="20" height="20" viewBox="0 0 20 20" fill="none" stroke="#e8e8e8" stroke-width="1.500"><path d="M13 1H2.500A1.500 1.500 0 0 0 1 2.500v11A1.500 1.500 0 0 0 2.500 15H16M7 15v3M12 15v3M4 19h11M14.500 1h4.500v5a1.500 1.500 0 0 1-1.500 1.500H16A1.500 1.500 0 0 1 14.500 6zM14.500 4h4.500M17 8v12"></path></svg>
          <svg width="20" height="20" viewBox="0 0 20 20" fill="none" stroke="#f1f1f1" stroke-width="1.500"><path d="M1 7.200h3.200L9 3v14l-4.800-4.200H1z"></path><path d="M11.500 7c1.500 1.700 1.500 4.300 0 6" ></path><path d="M14 4.500c2.700 3.200 2.700 7.800 0 11M16.500 2.500c4 4.500 4 10.500 0 15" stroke="#666"></path></svg>
          <svg width="20" height="20" viewBox="0 0 20 20"><rect x="1" y="4.500" width="16.500" height="11.500" rx="2.500" fill="none" stroke="#fff" stroke-width="1.400"></rect><rect x="2.800" y="6.300" width="13" height="8" rx="1" fill="#fff"></rect><path d="M18 8.300h2v4h-2z" fill="#fff"></path><path d="M4.500-.5L-.5 7h3L1.500 12 7 5H4z" fill="#fff" stroke="#212222" stroke-width=".8"></path></svg>
        </div>
        <div class="clock"><div>22:40</div><div>19-07-2025</div></div>
      </div>`;
  }
}

@customElement("app-root")
class AppRoot extends LitElement {
  static styles = css`
    :host { display: flex; flex-direction: column; width: 1920px; height: 1080px; overflow: hidden; background: #111827; font-family: Inter, sans-serif; }
    svg { display: block; }
    .page { flex: 1; display: flex; min-height: 0; }
    .side { width: 80px; box-sizing: border-box; background: #fff; border-right: 1px solid #374151; display: flex; flex-direction: column; position: relative; flex: none; }
    .brand { height: 80px; box-sizing: border-box; border-bottom: 1px solid #374151; padding: 20px 0 0 20px; }
    .logo { width: 40px; height: 40px; box-sizing: border-box; padding-bottom: 2px; border-radius: 10px; background: linear-gradient(135deg, #2196f3, #1e293b); color: #fff; display: flex; align-items: center; justify-content: center; }
    .toggle { position: absolute; left: 64px; top: 20px; width: 30px; height: 30px; box-sizing: border-box; border-radius: 50%; background: #fff; border: 1px solid #e5e7eb; box-shadow: 0 2px 5px rgba(0, 0, 0, 0.1); display: flex; align-items: center; justify-content: center; padding: 0 0 2px 1px; }
    .menu { flex: 1; display: flex; flex-direction: column; align-items: center; padding: 45px 0 0 1px; gap: 36px; color: #d1d5db; }
    .tools { border-top: 1px solid #374151; padding: 10px 14px 10px 15px; display: flex; flex-direction: column; gap: 10px; color: #d1d5db; }
    .btn { width: 50px; height: 50px; box-sizing: border-box; border: 1px solid #e5e7eb; border-radius: 10px; display: flex; align-items: center; justify-content: center; padding: 0 1px 1px 0; }
    .main { flex: 1; min-width: 0; overflow: hidden; }
    .top { height: 151px; box-sizing: border-box; background: #fff; border-bottom: 1px solid #374151; padding: 85px 30px 0; font-size: 22.500px; line-height: 35px; color: #d1d5db; }
    .body { padding: 40px 30px 0; width: 1120px; }
    .h2 { margin: 0; font-size: 25px; line-height: 35px; font-weight: 600; color: #fff; }
    .grid { margin-top: 30px; display: grid; grid-template-columns: repeat(3, 1fr); gap: 30px; }
    .panel { margin-top: 40px; height: 200px; box-sizing: border-box; background: #fff; border: 1px solid #e1e4e9; border-radius: 15px; }
  `;
  render() {
    return html`
      <browser-chrome></browser-chrome>
      <div class="page">
        <div class="side">
          <div class="brand"><div class="logo">${fa("cap", 19)}</div></div>
          <div class="menu">${fa("comments", 24)}${fa("file", 24)}${fa("chart", 24)}</div>
          <div class="tools"><div class="btn">${fa("sun", 21)}</div><div class="btn">${fa("sync", 20)}</div></div>
          <div class="toggle"><svg width="10" height="15" viewBox="0 0 10 15" fill="none" stroke="#9ca3af" stroke-width="2" stroke-linecap="round"><path d="M2.500 2l6 5.500-6 5.500"></path></svg></div>
        </div>
        <div class="main">
          <div class="top">Choose your AI tutor and start learning with personalized guidance</div>
          <div class="body">
            <h2 class="h2">Select Your Tutor Persona</h2>
            <div class="grid">${TUTORS.map((t) => html`<tutor-card .tutor=${t}></tutor-card>`)}</div>
            <div class="panel"></div>
          </div>
        </div>
      </div>
      <task-bar></task-bar>`;
  }
}
